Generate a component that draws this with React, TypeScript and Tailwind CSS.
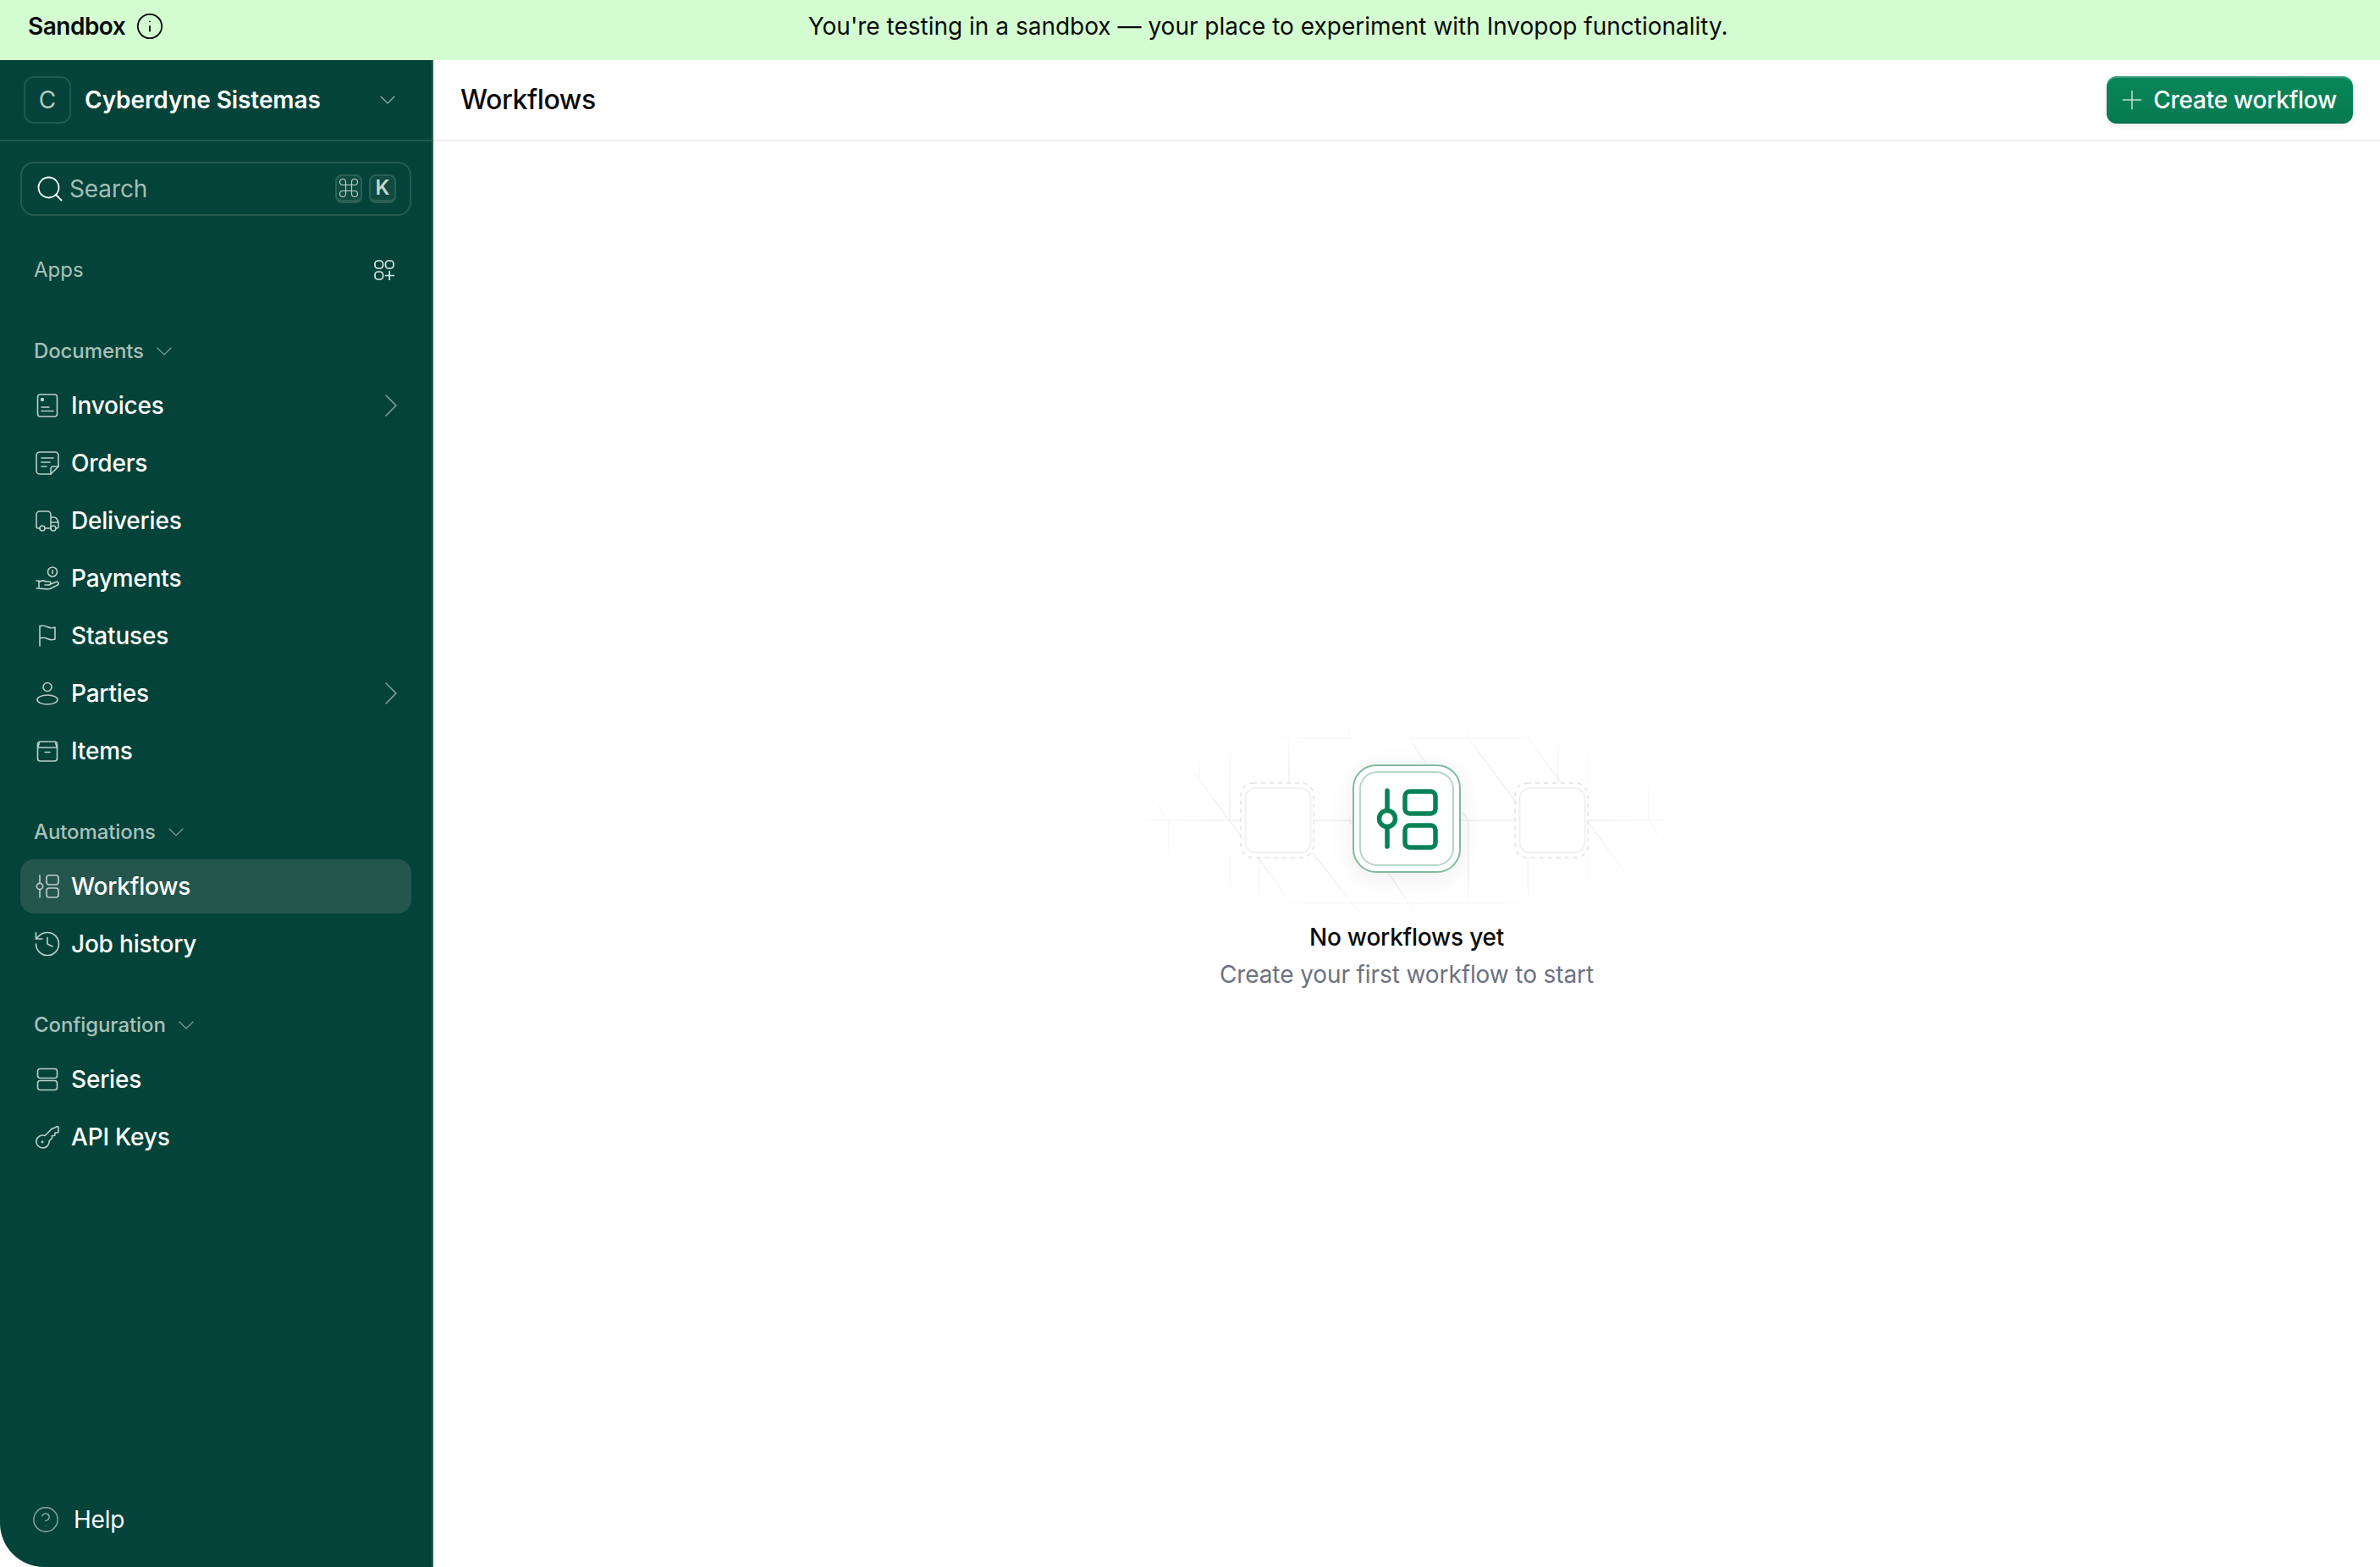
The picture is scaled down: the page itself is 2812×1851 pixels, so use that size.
import { ChevronDown, ChevronRight, Command, History, Info, Plus, Search, CircleHelp } from 'lucide-react'
import type { ReactNode } from 'react'

const svgProps = {
  width: 28,
  height: 28,
  viewBox: '0 0 28 28',
  fill: 'none',
  stroke: 'currentColor',
  strokeWidth: 1.6,
  strokeLinecap: 'round' as const,
  strokeLinejoin: 'round' as const,
}

function InvoiceIcon() {
  return (
    <svg {...svgProps}>
      <rect x="2.5" y="1" width="23" height="26" rx="3" />
      <circle cx="8" cy="7" r="2.2" fill="currentColor" stroke="none" />
      <path d="M7 16h9M7 20.5h14" />
    </svg>
  )
}

function OrderIcon() {
  return (
    <svg {...svgProps}>
      <path d="M5 1h18a4 4 0 0 1 4 4v13l-9 9H5a4 4 0 0 1-4-4V5a4 4 0 0 1 4-4z" />
      <path d="M27 18h-6a3 3 0 0 0-3 3v6M7 8h14M7 13h10M7 18h6" />
    </svg>
  )
}

function TruckIcon() {
  return (
    <svg {...svgProps}>
      <path d="M5 23H3a2 2 0 0 1-2-2V7a4 4 0 0 1 4-4h9a4 4 0 0 1 4 4v16M11 23h7M18 10h4a3 3 0 0 1 2.5 1.3l2 3a3 3 0 0 1 .5 1.7v5a2 2 0 0 1-2 2h-1M18 16h9" />
      <circle cx="8" cy="23" r="3" />
      <circle cx="21" cy="23" r="3" />
    </svg>
  )
}

function HandCoinIcon() {
  return (
    <svg {...svgProps}>
      <circle cx="20" cy="6.5" r="5.5" />
      <path d="M20 4.5v4M1 17h3v9H1M4 18.5c3-2 6-2 8-.5h4a2 2 0 0 1 0 4h-5M16.5 21.5l7.5-3a2 2 0 0 1 2 3.5l-9 4.5c-3 1-8 0-13-.5" />
    </svg>
  )
}

function FlagIcon() {
  return (
    <svg {...svgProps}>
      <path d="M5 26V2.5c4-1.5 6-.5 9 1s5 2 9 .5v14c-4 1.5-6 1-9-.5s-5-2-9-.5" />
    </svg>
  )
}

function PersonIcon() {
  return (
    <svg {...svgProps}>
      <circle cx="14" cy="6.5" r="5" />
      <ellipse cx="14" cy="21.5" rx="12" ry="5.5" />
    </svg>
  )
}

function BoxIcon() {
  return (
    <svg {...svgProps}>
      <rect x="2.5" y="3" width="23" height="23" rx="3" />
      <path d="M2.5 10l2-5M25.500 10l-2-5M2.500 10h23M11 15.500h6" />
    </svg>
  )
}

function WorkflowIcon() {
  return (
    <svg {...svgProps}>
      <path d="M5 1v9M5 18v9" />
      <circle cx="5" cy="14" r="3.6" />
      <rect x="13" y="1" width="14" height="11" rx="3" />
      <rect x="13" y="16" width="14" height="11" rx="3" />
    </svg>
  )
}

function SeriesIcon() {
  return (
    <svg {...svgProps}>
      <rect x="2.5" y="1.5" width="23" height="11" rx="3" />
      <rect x="2.5" y="15.5" width="23" height="11" rx="3" />
    </svg>
  )
}

function KeyIcon() {
  return (
    <svg {...svgProps}>
      <path d="M8.5 27a7.5 7.5 0 1 1 2.6-14.5L19 4.6c.5-.5 1-.7 1.600-.7L26 1.500a1 1 0 0 1 1 1V8a1 1 0 0 1-1 1h-3v2.500a1 1 0 0 1-1 1h-2.500V15a1 1 0 0 1-.3.700l-3.100 3.100A7.500 7.500 0 0 1 8.500 27z" />
      <circle cx="8" cy="20" r="1.400" fill="currentColor" stroke="none" />
    </svg>
  )
}

function HistoryIcon() {
  return <History size={36} strokeWidth={1.1} className="shrink-0" />
}

function AppsIcon() {
  return (
    <svg width="24" height="24" viewBox="0 0 24 24" fill="none" stroke="currentColor" strokeWidth="1.7" strokeLinecap="round">
      <rect x="1" y="1" width="9.500" height="9" rx="3.500" />
      <rect x="13.500" y="1" width="9.500" height="9" rx="3.500" />
      <rect x="1" y="14" width="9.500" height="9" rx="3.500" />
      <path d="M18.200 13.500v10M13.500 18.500h10" />
    </svg>
  )
}

type NavEntry = { label: string; icon: ReactNode; more?: boolean; active?: boolean }

const groups: { title: string; items: NavEntry[] }[] = [
  {
    title: 'Documents',
    items: [
      { label: 'Invoices', icon: <InvoiceIcon />, more: true },
      { label: 'Orders', icon: <OrderIcon /> },
      { label: 'Deliveries', icon: <TruckIcon /> },
      { label: 'Payments', icon: <HandCoinIcon /> },
      { label: 'Statuses', icon: <FlagIcon /> },
      { label: 'Parties', icon: <PersonIcon />, more: true },
      { label: 'Items', icon: <BoxIcon /> },
    ],
  },
  {
    title: 'Automations',
    items: [
      { label: 'Workflows', icon: <WorkflowIcon />, active: true },
      { label: 'Job history', icon: <HistoryIcon /> },
    ],
  },
  {
    title: 'Configuration',
    items: [
      { label: 'Series', icon: <SeriesIcon /> },
      { label: 'API Keys', icon: <KeyIcon /> },
    ],
  },
]

function NavRow({ item }: { item: NavEntry }) {
  return (
    <div className={`flex h-16 items-center rounded-2xl pl-[17px] ${item.active ? 'bg-[#25564e]' : ''}`}>
      <span className="flex w-[30px] justify-center text-[#bccfc9]">{item.icon}</span>
      <span className="ml-[13px] text-[28px] font-medium tracking-[-0.2px] text-white">{item.label}</span>
      {item.more && <ChevronRight size={48} strokeWidth={0.8} className="ml-auto text-[#80a098]" />}
    </div>
  )
}

function EmptyIllustration() {
  return (
    <svg width="660" height="234" viewBox="0 0 660 234" fill="none">
      <defs>
        <radialGradient id="fade" cx="50%" cy="50%" r="50%">
          <stop offset="0%" stopColor="#fff" />
          <stop offset="65%" stopColor="#fff" />
          <stop offset="100%" stopColor="#000" />
        </radialGradient>
        <mask id="fadeMask">
          <rect width="660" height="234" fill="url(#fade)" />
        </mask>
        <filter id="soft" x="-40%" y="-40%" width="180%" height="180%">
          <feDropShadow dx="0" dy="6" stdDeviation="14" floodColor="#000" floodOpacity="0.07" />
        </filter>
      </defs>
      <g mask="url(#fadeMask)">
        <g transform="translate(-2 -10) scale(0.4237 0.3333)" stroke="#f0f0f0" strokeWidth="1.500">
          <path
            vectorEffect="non-scaling-stroke"
            d="M290 95H622M790 95H1290M0 387H1553M220 680H1290M120 387V610M205 130V240M290 95V385M290 520V680M372 520V700M455 60V255M455 680V720M622 30V95M955 30V95M955 387V680M1122 30V95M1122 518V680M1205 95V255M1290 95V255M1290 520V680M1373 540V680M1458 210V387M155 155L320 440M30 235L120 387M370 520L460 680M520 500L630 680L680 750M622 387L640 415M730 570L790 680L830 750M790 95L840 190M955 95L1087 320M1122 95L1215 255M940 360L955 387M1290 395L1420 620M1458 387L1540 530M955 680L990 740M1122 680L1150 720"
          />
        </g>
      </g>
      <g stroke="#e2e2e2" fill="#fff">
        <rect x="134" y="75" width="86" height="88" rx="14" strokeWidth="1.500" strokeDasharray="5 5" />
        <rect x="139.500" y="81" width="77" height="76" rx="12" stroke="#f1f1f1" strokeWidth="2" />
        <rect x="458" y="75" width="86" height="88" rx="14" strokeWidth="1.500" strokeDasharray="5 5" />
        <rect x="463.500" y="81" width="77" height="76" rx="12" stroke="#f1f1f1" strokeWidth="2" />
      </g>
      <rect x="267" y="54" width="126" height="126" rx="27" fill="#fff" stroke="#7fbb9d" strokeWidth="2" filter="url(#soft)" />
      <rect x="275" y="62" width="110" height="110" rx="20" fill="#fff" stroke="#b4d8c5" strokeWidth="2" />
      <g stroke="#058255" strokeWidth="5.500" strokeLinecap="round">
        <path d="M307 84v23M307 127v23" />
        <circle cx="307" cy="117" r="9.500" />
        <rect x="328" y="85" width="36" height="26" rx="5.500" />
        <rect x="328" y="125" width="36" height="26" rx="5.500" />
      </g>
    </svg>
  )
}

export default function App() {
  return (
    <div className="flex h-screen flex-col overflow-hidden bg-white font-['Inter',sans-serif] text-[#0a0a0a]">
      {/* Sandbox banner */}
      <div className="flex h-[71px] shrink-0 items-center bg-[#d3fdd1] pb-[10px] pl-[33px] pr-[10px] text-[28px]">
        <span className="font-semibold tracking-[-0.5px]">Sandbox</span>
        <Info size={34} strokeWidth={1.3} className="ml-3" />
        <p className="flex-1 text-center">You're testing in a sandbox — your place to experiment with Invopop functionality.</p>
      </div>

      <div className="flex min-h-0 flex-1">
        <aside className="flex w-[512px] shrink-0 flex-col rounded-bl-[52px] border-r-2 border-[#2a5f54] bg-[#034339]">
          <div className="flex h-[96px] shrink-0 items-center border-b-2 border-[#1f5a4e] pl-[28px] pr-[36px]">
            <div className="flex h-[56px] w-[56px] items-center justify-center rounded-xl border-2 border-[#1f5a4e] text-[28px] text-[#b4c8c2]">
              C
            </div>
            <span className="ml-4 text-[28px] font-semibold tracking-[-0.1px] text-white">Cyberdyne Sistemas</span>
            <ChevronDown size={32} strokeWidth={1} className="ml-auto text-[#8fa9a2]" />
          </div>

          <div className="flex flex-1 flex-col px-6 pt-6">
            <div className="flex h-16 shrink-0 items-center rounded-2xl border-2 border-[#265b50] pl-[15px] pr-4">
              <Search size={36} strokeWidth={1.2} className="text-white" />
              <span className="ml-[5px] text-[28px] tracking-[-0.1px] text-[#a4bcb5]">Search</span>
              <span className="ml-auto flex gap-2">
                <span className="flex h-[34px] w-[32px] items-center justify-center rounded-lg border-2 border-b-4 border-[#2b6055] bg-[#0f4b40] text-[#bccfc9]">
                  <Command size={28} strokeWidth={1} className="shrink-0" />
                </span>
                <span className="flex h-[34px] w-[32px] items-center justify-center rounded-lg border-2 border-b-4 border-[#2b6055] bg-[#0f4b40] text-[24px] font-semibold text-[#c6d6d1]">
                  K
                </span>
              </span>
            </div>

            <div className="mt-8 flex h-16 items-center justify-between pl-4 pr-[20px] text-[24px] text-[#a9c0b9]">
              <span>Apps</span>
              <span className="text-[#e3ecea]">
                <AppsIcon />
              </span>
            </div>

            {groups.map((group) => (
              <div key={group.title} className="mt-[38px]">
                <div className="mb-[6px] flex h-[52px] items-center gap-2 pl-4 text-[24px] font-medium tracking-[-0.1px] text-[#a9c0b9]">
                  <span>{group.title}</span>
                  <ChevronDown size={32} strokeWidth={0.9} className="text-[#7b9b93]" />
                </div>
                <div className="flex flex-col gap-1">
                  {group.items.map((item) => (
                    <NavRow key={item.label} item={item} />
                  ))}
                </div>
              </div>
            ))}

            <div className="mb-6 mt-auto flex h-16 items-center pl-[13px]">
              <CircleHelp size={34} strokeWidth={1} className="text-[#8fa9a2]" />
              <span className="ml-4 text-[28px] tracking-[-0.2px] text-white">Help</span>
            </div>
          </div>
        </aside>

        <main className="flex min-w-0 flex-1 flex-col">
          <header className="flex h-[96px] shrink-0 items-center justify-between border-b-2 border-[#eeeeee] pl-8 pr-8">
            <h1 className="text-[32px] font-medium tracking-[-0.4px]">Workflows</h1>
            <button className="flex h-[56px] items-center gap-[7px] rounded-xl bg-linear-to-b from-[#07865a] to-[#087a52] pl-3 pr-[19px] text-[28px] font-medium tracking-[-0.25px] text-white shadow-[inset_0_2px_0_rgba(255,255,255,0.2),inset_0_-2px_0_rgba(0,0,0,0.08),0_2px_6px_rgba(0,0,0,0.1)]">
              <Plus size={36} strokeWidth={1} className="text-[#c3e0d2]" />
              Create workflow
            </button>
          </header>

          <div className="flex flex-1 flex-col items-center justify-center pt-[3px]">
            <EmptyIllustration />
            <p className="mt-[3px] text-[28px] font-medium leading-10 tracking-[-0.22px]">No workflows yet</p>
            <p className="mt-1 text-[28px] leading-10 tracking-[-0.1px] text-[#6b7280]">Create your first workflow to start</p>
          </div>
        </main>
      </div>
    </div>
  )
}
